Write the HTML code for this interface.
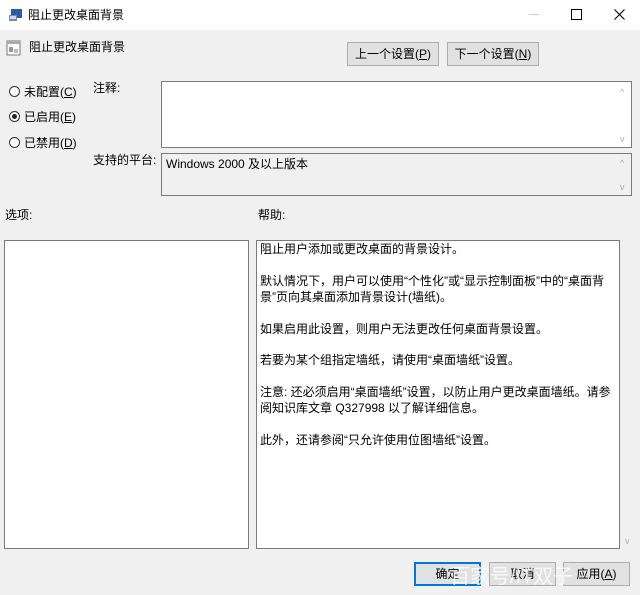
<!DOCTYPE html>
<html><head><meta charset="utf-8"><style>
body{margin:0;width:640px;height:595px;background:#f0f0f0;font-family:"Liberation Sans","Noto Sans CJK SC",sans-serif;font-size:12px;color:#000;position:relative;overflow:hidden}
.a{position:absolute;white-space:nowrap}
.btn{position:absolute;background:#e1e1e1;border:1px solid #adadad;text-align:center;line-height:22px;box-sizing:border-box}
.box{position:absolute;border:1px solid #7a7a7a;box-sizing:border-box}
.r{position:absolute;width:11px;height:11px;border:1px solid #333;border-radius:50%;background:#fff;box-sizing:border-box}
.sc{position:absolute;color:#aaa;font-size:9px}
</style></head><body>
<div class="a" style="left:0;top:0;width:640px;height:30px;background:#fff"></div>
<svg class="a" style="left:8px;top:7px" width="16" height="16"><rect x="3" y="2" width="11" height="9" fill="#2a5aa8"/><rect x="1" y="8" width="8" height="6" fill="#888"/><rect x="2" y="9" width="6" height="3" fill="#cde"/></svg>
<div class="a" style="left:28px;top:6px">阻止更改桌面背景</div>
<div class="a" style="left:529px;top:14px;width:10px;height:1px;background:#ccc"></div>
<div class="a" style="left:571px;top:9px;width:9px;height:9px;border:1px solid #000"></div>
<svg class="a" style="left:614px;top:9px" width="11" height="11"><path d="M0.5 0.5L10.5 10.5M10.5 0.5L0.5 10.5" stroke="#000" stroke-width="1.1"/></svg>
<svg class="a" style="left:6px;top:40px" width="16" height="17"><rect x="1" y="1" width="13" height="14" fill="#fff" stroke="#777"/><rect x="1" y="1" width="13" height="3" fill="#aaa"/><rect x="3" y="7" width="4" height="5" fill="#999"/><rect x="8" y="9" width="4" height="4" fill="#bbb"/></svg>
<div class="a" style="left:29px;top:38px">阻止更改桌面背景</div>
<div class="btn" style="left:347px;top:42px;width:92px;height:24px">上一个设置(<u>P</u>)</div>
<div class="btn" style="left:447px;top:42px;width:92px;height:24px">下一个设置(<u>N</u>)</div>
<div class="r" style="left:9px;top:86px"></div><div class="a" style="left:24px;top:83px">未配置(<u>C</u>)</div>
<div class="r" style="left:9px;top:111px"></div><div class="a" style="left:12px;top:114px;width:5px;height:5px;border-radius:50%;background:#222"></div><div class="a" style="left:24px;top:108px">已启用(<u>E</u>)</div>
<div class="r" style="left:9px;top:137px"></div><div class="a" style="left:24px;top:134px">已禁用(<u>D</u>)</div>
<div class="a" style="left:93px;top:79px">注释:</div>
<div class="a" style="left:93px;top:151px">支持的平台:</div>
<div class="box" style="left:161px;top:81px;width:471px;height:67px;background:#fff"></div>
<div class="sc" style="left:620px;top:87px">^</div><div class="sc" style="left:620px;top:134px">v</div>
<div class="box" style="left:161px;top:153px;width:471px;height:43px;background:#f0f0f0"></div>
<div class="sc" style="left:620px;top:158px">^</div><div class="sc" style="left:620px;top:182px">v</div>
<div class="a" style="left:166px;top:155px">Windows 2000 及以上版本</div>
<div class="a" style="left:5px;top:206px">选项:</div>
<div class="a" style="left:258px;top:206px">帮助:</div>
<div class="box" style="left:4px;top:240px;width:245px;height:309px;background:#fff"></div>
<div class="box" style="left:256px;top:240px;width:364px;height:309px;background:#fff"></div>
<div class="sc" style="left:625px;top:536px">v</div>
<div class="a" style="left:260px;top:242px;line-height:15.9px;white-space:normal;width:360px">阻止用户添加或更改桌面的背景设计。<br><br>默认情况下，用户可以使用“个性化”或“显示控制面板”中的“桌面背景”页向其桌面添加背景设计(墙纸)。<br><br>如果启用此设置，则用户无法更改任何桌面背景设置。<br><br>若要为某个组指定墙纸，请使用“桌面墙纸”设置。<br><br>注意: 还必须启用“桌面墙纸”设置，以防止用户更改桌面墙纸。请参阅知识库文章 Q327998 以了解详细信息。<br><br>此外，还请参阅“只允许使用位图墙纸”设置。</div>
<div class="btn" style="left:414px;top:562px;width:67px;height:24px;border:2px solid #0078d7;line-height:20px">确定</div>
<div class="btn" style="left:489px;top:562px;width:67px;height:24px">取消</div>
<div class="btn" style="left:563px;top:562px;width:67px;height:24px">应用(<u>A</u>)</div>
<div class="a" style="left:450px;top:560px;color:rgba(255,255,255,.8);font-size:20px">百家号/IT双子</div>
</body></html>
